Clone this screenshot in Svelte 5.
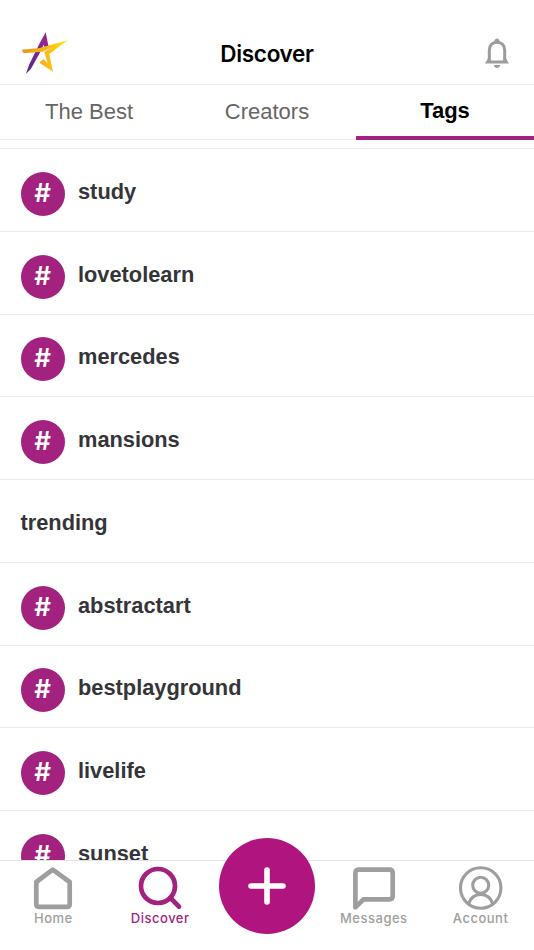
<script lang="ts">
  let activeTab = 'Tags';
  let activeNav = 'Discover';

  const tabs = ['The Best', 'Creators', 'Tags'];

  const rows = [
    { label: 'study', heading: false },
    { label: 'lovetolearn', heading: false },
    { label: 'mercedes', heading: false },
    { label: 'mansions', heading: false },
    { label: 'trending', heading: true },
    { label: 'abstractart', heading: false },
    { label: 'bestplayground', heading: false },
    { label: 'livelife', heading: false },
    { label: 'sunset', heading: false }
  ];

  const navItems = ['Home', 'Discover', '', 'Messages', 'Account'];
</script>

<div class="app">
  <header class="header">
    <svg class="logo" viewBox="60 30 150 141" aria-label="Logo">
      <defs>
        <linearGradient id="purple" x1="0" y1="1" x2="0.8" y2="0">
          <stop offset="0" stop-color="#54268f" />
          <stop offset="1" stop-color="#9b2790" />
        </linearGradient>
        <linearGradient id="gold" x1="0" y1="0" x2="1" y2="0">
          <stop offset="0" stop-color="#e8941e" />
          <stop offset="0.6" stop-color="#fbbd16" />
          <stop offset="1" stop-color="#ffec00" />
        </linearGradient>
      </defs>
      <path d="M137 37 L147 86 L135 88 L131 74 L118 101 L93 146 L78 161 L88 133 L119 70 Z" fill="url(#purple)" />
      <path d="M65 89 L119 84 L203 61 L148 102 L159 155 L118 128 L130 117 L143 130 L133 96 L158 82 L128 95 L71 100 Z" fill="url(#gold)" />
    </svg>
    <h1>Discover</h1>
    <button class="bell" aria-label="Notifications">
      <svg viewBox="0 0 26 32">
        <path d="M5.3 25.4 V13.3 C5.3 8.3 8.4 5.2 13 5.2 S20.7 8.3 20.7 13.3 V25.4" fill="none" stroke="#9c9c9c" stroke-width="3" />
        <path d="M10.2 5.3 C10.2 .2 15.8 .2 15.8 5.3 Z M4 21.5 L1 26.5 H25 L22 21.5 V23.6 H4 Z M9.8 28 H16.2 C15.8 32 10.2 32 9.8 28 Z" fill="#9c9c9c" />
      </svg>
    </button>
  </header>

  <nav class="tabs">
    {#each tabs as tab}
      <button class="tab" class:active={tab === activeTab} on:click={() => (activeTab = tab)}>{tab}</button>
    {/each}
  </nav>

  <main class="list">
    {#each rows as row}
      <div class="row" class:heading={row.heading}>
        {#if !row.heading}
          <span class="hash">#</span>
        {/if}
        <span class="label">{row.label}</span>
      </div>
    {/each}
  </main>

  <footer class="bottom-nav">
    {#each navItems as item}
      {#if item === ''}
        <div class="add-slot">
          <button class="add" aria-label="Create post">
            <svg viewBox="0 0 38 38">
              <path d="M19 3 V35 M3 19 H35" fill="none" stroke="#fff" stroke-width="5.6" stroke-linecap="round" />
            </svg>
          </button>
        </div>
      {:else}
        <button class="nav-item" class:active={item === activeNav} on:click={() => (activeNav = item)}>
          <svg viewBox="0 0 46 46" fill="none" stroke="currentColor" stroke-width="4.7" stroke-linejoin="round" stroke-linecap="round">
            {#if item === 'Home'}
              <path d="M22.7 4.7 L39.7 17 V39.3 Q39.7 41.8 37.2 41.8 H8.8 Q6.3 41.8 6.3 39.3 V17 Z" />
            {:else if item === 'Discover'}
              <circle cx="21" cy="21" r="17" />
              <path d="M33.5 33 L42 41.7" />
            {:else if item === 'Messages'}
              <path d="M4.4 42.3 V8 Q4.4 4.7 7.7 4.7 H38.4 Q41.7 4.7 41.7 8 V31 Q41.7 34.3 38.4 34.3 H12.4 Z" />
            {:else}
              <g stroke-width="3.1">
                <circle cx="22.7" cy="23" r="20.2" />
                <circle cx="22.7" cy="20.3" r="8" />
                <path d="M11 38.8 C13.5 26.2 31.9 26.2 34.4 38.8" />
              </g>
            {/if}
          </svg>
          <span>{item}</span>
        </button>
      {/if}
    {/each}
  </footer>
</div>

<style>
  :global(body) {
    margin: 0;
    background: #fff;
  }

  .app {
    width: 100%;
    height: 950px;
    display: flex;
    flex-direction: column;
    overflow: hidden;
    background: #fff;
    font-family: 'Liberation Sans', Arial, sans-serif;
  }

  button {
    padding: 0;
    border: none;
    background: none;
    font: inherit;
    cursor: pointer;
  }

  .header {
    box-sizing: border-box;
    flex: none;
    height: 85px;
    padding: 23px 22px 0 20px;
    display: grid;
    grid-template-columns: 1fr auto 1fr;
    align-items: center;
    border-bottom: 1px solid #eaeaea;
  }

  .logo {
    width: 50px;
    height: 47px;
  }

  h1 {
    margin: 0 0 0 2px;
    font-family: Inter, sans-serif;
    font-size: 22.5px;
    font-weight: 600;
    letter-spacing: -0.3px;
    color: #000;
  }

  .bell {
    justify-self: end;
    margin: 0 2px 2px 0;
  }

  .bell svg {
    display: block;
    width: 26px;
    height: 32px;
  }

  .tabs {
    box-sizing: border-box;
    flex: none;
    height: 55px;
    display: grid;
    grid-template-columns: repeat(3, 1fr);
    box-shadow: inset 0 -1px #eee;
  }

  .tab {
    box-sizing: border-box;
    padding-top: 1px;
    font-size: 22px;
    color: #666;
    border-bottom: 3px solid transparent;
  }

  .tab.active {
    font-weight: bold;
    color: #000;
    border-bottom: 4px solid #a3217f;
  }

  .list {
    flex: 1;
    min-height: 0;
    margin-top: 8px;
    overflow: hidden;
    border-top: 1px solid #e9e9e9;
  }

  .row {
    box-sizing: border-box;
    height: 82.75px;
    padding: 8px 20.5px 0;
    display: flex;
    align-items: center;
    gap: 13.5px;
    border-bottom: 1px solid #e9e9e9;
  }

  .hash {
    width: 44px;
    height: 44px;
    border-radius: 50%;
    background: #a3217f;
    color: #fff;
    font-family: Inter, sans-serif;
    font-size: 26px;
    font-weight: 600;
    line-height: 42px;
    text-align: center;
  }

  .label {
    margin-bottom: 4px;
    font-size: 21.8px;
    font-weight: bold;
    color: #353539;
  }

  .bottom-nav {
    box-sizing: border-box;
    flex: none;
    height: 90px;
    display: grid;
    grid-template-columns: repeat(5, 1fr);
    border-top: 1px solid #e5e5e5;
    background: #fff;
  }

  .nav-item {
    padding-top: 4px;
    display: flex;
    flex-direction: column;
    align-items: center;
    color: #9e9e9e;
  }

  .nav-item.active {
    color: #a3217f;
  }

  .nav-item svg {
    width: 46px;
    height: 46px;
  }

  .nav-item span {
    margin-top: -1px;
    font-family: Inter, sans-serif;
    font-size: 13px;
    line-height: 16px;
    font-weight: 500;
    letter-spacing: 0.5px;
  }

  .add-slot {
    display: flex;
    justify-content: center;
  }

  .add {
    flex: none;
    width: 96px;
    height: 96px;
    margin-top: -23px;
    position: relative;
    display: flex;
    align-items: center;
    justify-content: center;
    border-radius: 50%;
    background: #b0147e;
  }

  .add svg {
    width: 38px;
    height: 38px;
  }
</style>
